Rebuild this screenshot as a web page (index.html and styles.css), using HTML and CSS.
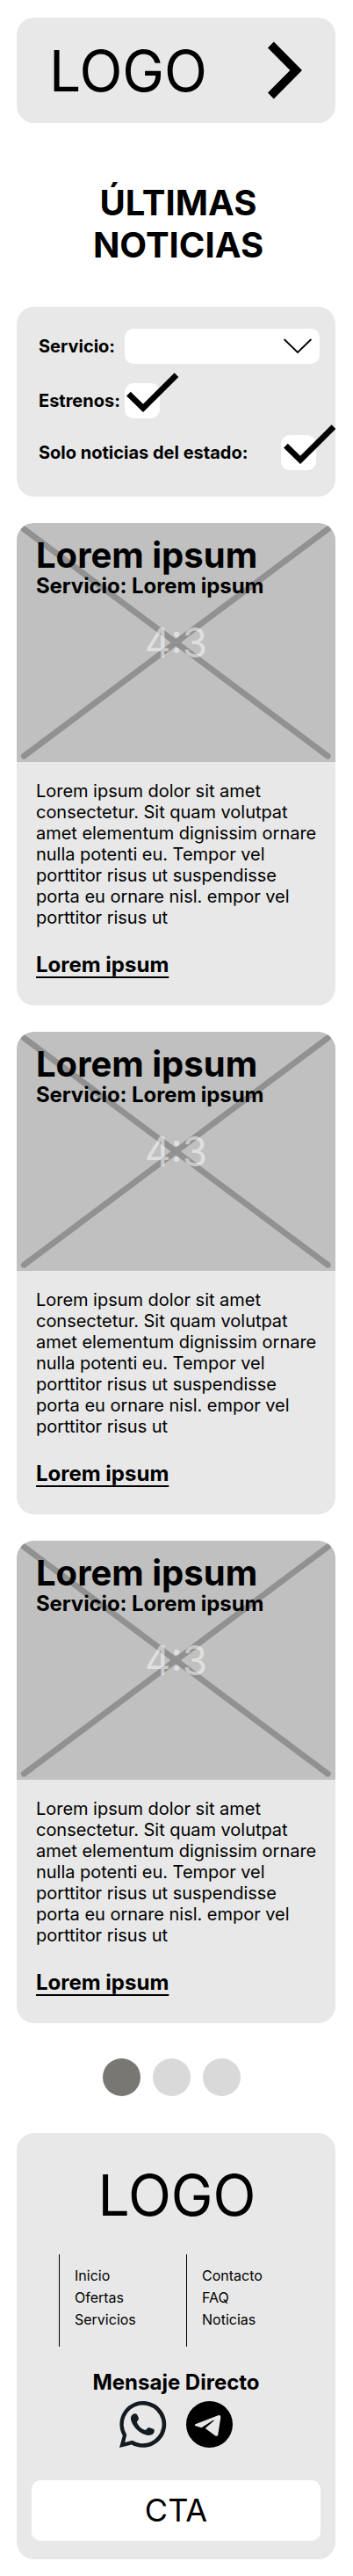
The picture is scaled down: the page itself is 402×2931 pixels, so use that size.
FILE: index.html
```html
<!DOCTYPE html>
<html lang="es">
<head>
<meta charset="utf-8">
<title>Últimas noticias</title>
<link rel="stylesheet" href="styles.css">
</head>
<body>
<header class="header">
  <span class="logo">LOGO</span>
  <svg class="header-arrow" viewBox="0 0 40 66"><path d="M3.4 4L32.2 33L3.4 62" fill="none" stroke="#000" stroke-width="9.6"/></svg>
</header>
<h1 class="page-title">ÚLTIMAS<br>NOTICIAS</h1>
<section class="filters">
  <div class="filter-row">
    <span class="filter-label">Servicio:</span>
    <div class="select"><svg class="select-arrow" viewBox="0 0 32 18"><path d="M.6 1L16 16L31.4 1" fill="none" stroke="#000" stroke-width="1.8"/></svg></div>
  </div>
  <div class="filter-row row-new">
    <span class="filter-label">Estrenos:</span>
    <div class="checkbox"><svg class="tick" viewBox="0 0 62 46"><path d="M4.4 25.1L21 41.4L59 3.7" fill="none" stroke="#000" stroke-width="6.7"/></svg></div>
  </div>
  <div class="filter-row row-state">
    <span class="filter-label">Solo noticias del estado:</span>
    <div class="checkbox"><svg class="tick tick-state" viewBox="0 0 62 46"><path d="M4.4 25.1L21 41.4L59 3.7" fill="none" stroke="#000" stroke-width="6.7"/></svg></div>
  </div>
</section>
<main class="news">
  <article class="card">
    <div class="card-image">
      <svg class="cross" viewBox="0 0 363 272"><path d="M8.3 7L354.3 265.2M354.3 7L8.3 265.2" stroke="#919191" stroke-width="6.8" stroke-linecap="round"/></svg>
      <span class="ratio">4:3</span>
      <h2 class="card-title">Lorem ipsum</h2>
      <p class="card-service">Servicio: Lorem ipsum</p>
    </div>
    <div class="card-body">
      <p class="card-text">Lorem ipsum dolor sit amet consectetur. Sit quam volutpat amet elementum dignissim ornare nulla potenti eu. Tempor vel porttitor risus ut suspendisse porta eu ornare nisl. empor vel porttitor risus ut</p>
      <a class="card-link">Lorem ipsum</a>
    </div>
  </article>
  <article class="card">
    <div class="card-image">
      <svg class="cross" viewBox="0 0 363 272"><path d="M8.3 7L354.3 265.2M354.3 7L8.3 265.2" stroke="#919191" stroke-width="6.8" stroke-linecap="round"/></svg>
      <span class="ratio">4:3</span>
      <h2 class="card-title">Lorem ipsum</h2>
      <p class="card-service">Servicio: Lorem ipsum</p>
    </div>
    <div class="card-body">
      <p class="card-text">Lorem ipsum dolor sit amet consectetur. Sit quam volutpat amet elementum dignissim ornare nulla potenti eu. Tempor vel porttitor risus ut suspendisse porta eu ornare nisl. empor vel porttitor risus ut</p>
      <a class="card-link">Lorem ipsum</a>
    </div>
  </article>
  <article class="card">
    <div class="card-image">
      <svg class="cross" viewBox="0 0 363 272"><path d="M8.3 7L354.3 265.2M354.3 7L8.3 265.2" stroke="#919191" stroke-width="6.8" stroke-linecap="round"/></svg>
      <span class="ratio">4:3</span>
      <h2 class="card-title">Lorem ipsum</h2>
      <p class="card-service">Servicio: Lorem ipsum</p>
    </div>
    <div class="card-body">
      <p class="card-text">Lorem ipsum dolor sit amet consectetur. Sit quam volutpat amet elementum dignissim ornare nulla potenti eu. Tempor vel porttitor risus ut suspendisse porta eu ornare nisl. empor vel porttitor risus ut</p>
      <a class="card-link">Lorem ipsum</a>
    </div>
  </article>
</main>
<nav class="dots"><i class="dot active"></i><i class="dot"></i><i class="dot"></i></nav>
<footer class="footer">
  <span class="logo">LOGO</span>
  <div class="links">
    <ul class="link-column"><li>Inicio</li><li>Ofertas</li><li>Servicios</li></ul>
    <ul class="link-column"><li>Contacto</li><li>FAQ</li><li>Noticias</li></ul>
  </div>
  <h3 class="contact-title">Mensaje Directo</h3>
  <div class="socials">
    <svg class="social" viewBox="0 0 53 53">
      <path d="M0 53L3.8 39.3A26.4 26.4 0 1 1 13.9 49.4ZM14.8 44.8A21.9 21.9 0 1 0 8.2 38.2L6.2 46.9Z" fill="#111b21" fill-rule="evenodd"/>
      <path d="M17.5 14.3C19 14 20 14.8 20.6 16.2L21.9 19.3C22.4 20.8 20.2 22.7 19.8 24C21.5 28.4 25 31.7 29.4 33.1C30.8 32.5 32 30.1 33.6 30L38.7 31.8C40.4 32.6 40 35 38.8 36.8C36.8 39.2 32.6 39.3 29.6 38.3C22 35.7 15.5 29.4 13.3 22C12.3 18.3 13.8 14.8 17.5 14.3Z" fill="#111b21"/>
    </svg>
    <svg class="social" viewBox="0 0 53 53">
      <circle cx="26.5" cy="26.5" r="26.5"/>
      <path d="M10.5 26.3L36.4 16.2C38.2 15.5 39.5 16.4 39.3 18.7L36.3 38C35.9 40 34.5 40.3 33 39.3L21.7 31.1L32 22C31.9 21.5 31.3 21.6 30.4 22.1L17.4 30.2L10.8 28.2C9.5 27.7 9.3 26.9 10.5 26.3Z" fill="#e8e8e8"/>
    </svg>
  </div>
  <div class="cta">CTA</div>
</footer>
</body>
</html>
```
FILE: styles.css
```css
* { box-sizing: border-box; margin: 0; padding: 0; }
body { width: 402px; padding: 20px 20px 19px 19px; background: #fff; color: #000; font-family: Inter, sans-serif; }
svg { display: block; overflow: visible; }
.header { display: flex; align-items: center; height: 120px; padding-left: 37px; background: #e8e8e8; border-radius: 20px; }
.logo { font-size: 64px; line-height: 77px; }
.header-arrow { width: 40px; height: 66px; margin-left: auto; margin-right: 37px; }
.page-title { margin: 67px 0 0 5px; font-size: 40px; line-height: 48px; text-align: center; }
.filters { height: 216px; margin-top: 46px; padding: 25px 18px 0 25px; background: #e8e8e8; border-radius: 20px; }
.filter-row { display: flex; align-items: center; justify-content: space-between; height: 40px; }
.row-new { margin-top: 22px; padding-right: 182px; }
.row-state { margin-top: 19px; padding-right: 4px; }
.filter-label { font-size: 20px; font-weight: 700; line-height: 24px; white-space: nowrap; }
.select { display: flex; align-items: center; justify-content: flex-end; width: 222px; height: 40px; padding-right: 9px; background: #fff; border-radius: 10px; }
.select-arrow { width: 32px; height: 18px; }
.checkbox { position: relative; flex: none; width: 40px; height: 40px; background: #fff; border-radius: 10px; }
.tick { position: absolute; left: 0; top: -13px; width: 62px; height: 46px; }
.tick-state { left: 1px; }
.news { display: flex; flex-direction: column; gap: 30px; margin-top: 30px; }
.card { height: 549px; overflow: hidden; background: #e8e8e8; border-radius: 20px; }
.card-image { position: relative; height: 272px; padding: 17px 22px; background: #c0c0c0; }
.cross { position: absolute; inset: 0; width: 363px; height: 272px; }
.ratio { position: absolute; inset: 0; color: rgba(255, 255, 255, .5); font-size: 46px; line-height: 272px; text-align: center; }
.card-title { position: relative; font-size: 40px; line-height: 40px; }
.card-service { position: relative; font-size: 24px; font-weight: 700; line-height: 29px; letter-spacing: -.1px; }
.card-body { padding: 21px 20px 0 22px; }
.card-text { font-size: 20px; line-height: 24px; letter-spacing: -.03px; }
.card-link { display: inline-block; margin-top: 27px; font-size: 24px; font-weight: 700; line-height: 29px; text-decoration: underline; text-decoration-thickness: 2px; text-underline-offset: 5px; }
.dots { display: flex; gap: 14px; margin: 40px 0 42px 98px; }
.dot { width: 43px; height: 43px; background: #d9d9d9; border-radius: 50%; }
.active { background: #787774; }
.footer { display: flex; flex-direction: column; align-items: center; height: 485px; padding-top: 32px; background: #e8e8e8; border-radius: 20px; }
.footer .logo { margin-left: 2px; }
.links { display: flex; align-self: flex-start; margin: 29px 0 0 48px; }
.link-column { width: 145px; height: 105px; padding: 12px 0 0 17px; border-left: 1px solid #000; list-style: none; font-size: 16px; line-height: 25px; }
.contact-title { margin-top: 26px; font-size: 24px; font-weight: 700; line-height: 29px; }
.socials { display: flex; gap: 23px; margin-top: 7px; }
.social { width: 53px; height: 53px; }
.cta { width: 329px; height: 69px; margin-top: 37px; background: #fff; border-radius: 10px; font-size: 36px; line-height: 69px; text-align: center; }
```
